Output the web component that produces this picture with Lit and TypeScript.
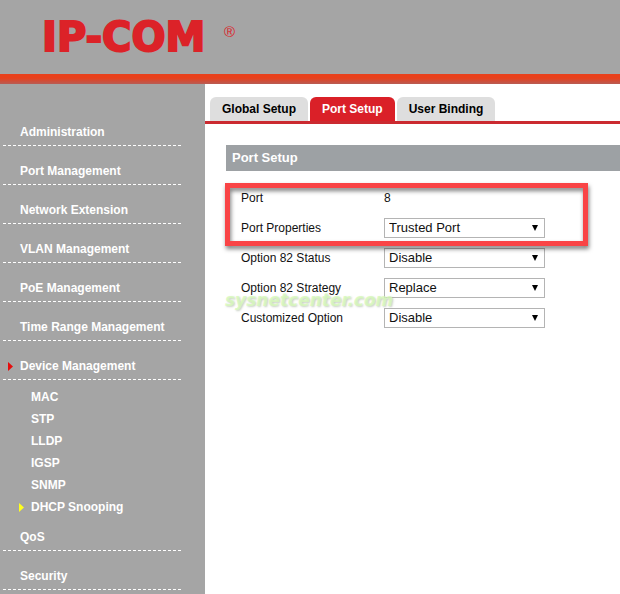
import { LitElement, html, css, nothing } from "lit";
import { customElement, state } from "lit/decorators.js";

interface MenuItem {
  label: string;
  children?: string[];
}

interface Field {
  id: string;
  label: string;
  value: string;
  options: string[];
}

const MENU: MenuItem[] = [
  { label: "Administration" },
  { label: "Port Management" },
  { label: "Network Extension" },
  { label: "VLAN Management" },
  { label: "PoE Management" },
  { label: "Time Range Management" },
  {
    label: "Device Management",
    children: ["MAC", "STP", "LLDP", "IGSP", "SNMP", "DHCP Snooping"],
  },
  { label: "QoS" },
  { label: "Security" },
];

const TABS = ["Global Setup", "Port Setup", "User Binding"];

const FIELDS: Field[] = [
  { id: "properties", label: "Port Properties", value: "Trusted Port", options: ["Trusted Port", "Untrusted Port"] },
  { id: "status", label: "Option 82 Status", value: "Disable", options: ["Disable", "Enable"] },
  { id: "strategy", label: "Option 82 Strategy", value: "Replace", options: ["Replace", "Keep", "Drop"] },
  { id: "custom", label: "Customized Option", value: "Disable", options: ["Disable", "Enable"] },
];

@customElement("site-header")
export class SiteHeader extends LitElement {
  static styles = css`
    :host {
      display: block;
    }
    .bar {
      display: flex;
      align-items: center;
      height: 74px;
      padding-left: 42px;
      background: #a5a5a5;
      color: #dc2228;
    }
    .brand {
      display: flex;
      gap: 4px;
      font-family: "DejaVu Sans", sans-serif;
    }
    .name {
      min-width: 178px;
      font-size: 40px;
      line-height: 42px;
      font-weight: 700;
      -webkit-text-stroke: 2px #dc2228;
    }
    .mark {
      font-family: "Liberation Sans", sans-serif;
      font-size: 15px;
      line-height: 32px;
    }
    .stripe {
      height: 10px;
      background: linear-gradient(#e8401c 0 40%, #b85c54);
    }
  `;

  render() {
    return html`
      <header>
        <div class="bar">
          <div class="brand"><span class="name">IP-COM</span><span class="mark">®</span></div>
        </div>
        <div class="stripe"></div>
      </header>
    `;
  }
}

@customElement("side-menu")
export class SideMenu extends LitElement {
  static styles = css`
    :host {
      display: block;
      background: #a5a5a5;
    }
    ul {
      margin: 0;
      padding: 0;
      list-style: none;
      display: flex;
      flex-direction: column;
    }
    .menu {
      gap: 17px;
      padding: 40px 22px 0 3px;
    }
    a {
      display: flex;
      align-items: center;
      gap: 7px;
      color: #fff;
      font-weight: 700;
      font-size: 12px;
      text-decoration: none;
      white-space: nowrap;
    }
    .item {
      height: 22px;
      padding: 0 0 6px 5px;
      box-sizing: border-box;
      background: repeating-linear-gradient(90deg, #fff 0 3px, transparent 3px 5px) bottom / 100% 1px no-repeat;
    }
    .sub {
      gap: 10px;
      padding: 11px 0 0 16px;
    }
    .sub a {
      height: 12px;
    }
    .sub li:last-child {
      height: 11px;
    }
    .arrow {
      width: 5px;
      height: 9px;
      flex: none;
    }
    .red {
      fill: #e60c0c;
    }
    .yellow {
      fill: #ffff1e;
    }
    .blank {
      fill: none;
    }
  `;

  private arrow(tone: string) {
    return html`<svg class="arrow ${tone}" viewBox="0 0 5 9" aria-hidden="true"><path d="M0 0L5 4.5L0 9Z" /></svg>`;
  }

  render() {
    return html`
      <nav>
        <ul class="menu">
          ${MENU.map(
            (item) => html`
              <li>
                <a class="item" href="#">${this.arrow(item.children ? "red" : "blank")}${item.label}</a>
                ${item.children
                  ? html`<ul class="sub">
                      ${item.children.map(
                        (child) => html`<li>
                          <a href="#">${this.arrow(child === "DHCP Snooping" ? "yellow" : "blank")}${child}</a>
                        </li>`
                      )}
                    </ul>`
                  : nothing}
              </li>
            `
          )}
        </ul>
      </nav>
    `;
  }
}

@customElement("port-form")
export class PortForm extends LitElement {
  static styles = css`
    :host {
      display: block;
      position: relative;
    }
    h1 {
      margin: 0;
      padding: 0 6px;
      background: #9da1a4;
      color: #fff;
      font-size: 13px;
      line-height: 26px;
      font-weight: 700;
    }
    .rows {
      padding: 12px 15px 0;
    }
    .row {
      display: grid;
      grid-template-columns: 143px 161px;
      align-items: center;
      height: 30px;
    }
    .picker {
      display: grid;
      align-items: center;
    }
    select,
    .caret {
      grid-area: 1 / 1;
    }
    select {
      appearance: none;
      width: 100%;
      height: 20px;
      margin: 0;
      padding: 0 20px 0 4px;
      border: 1px solid #b4b4b4;
      border-radius: 0;
      background: #fff;
      color: #111;
      font-family: inherit;
      font-size: 13px;
      line-height: 18px;
    }
    .caret {
      justify-self: end;
      width: 6px;
      height: 6px;
      margin-right: 7px;
      pointer-events: none;
    }
    .highlight {
      position: absolute;
      top: 38px;
      left: -1px;
      width: 363px;
      height: 63px;
      box-sizing: border-box;
      border: 5px solid #f94446;
      pointer-events: none;
      filter: drop-shadow(1px 3px 2px rgba(0, 0, 0, 0.5));
    }
    .watermark {
      position: absolute;
      top: 145px;
      left: -1px;
      font-family: "DejaVu Sans", sans-serif;
      font-size: 17px;
      line-height: 20px;
      font-weight: 700;
      font-style: italic;
      color: rgba(215, 250, 185, 0.8);
      text-shadow: 1px 1px 2px rgba(120, 140, 110, 0.4);
      pointer-events: none;
    }
  `;

  render() {
    return html`
      <h1>Port Setup</h1>
      <form class="rows">
        <div class="row"><span>Port</span><span>8</span></div>
        ${FIELDS.map(
          (f) => html`
            <div class="row">
              <label for=${f.id}>${f.label}</label>
              <div class="picker">
                <select id=${f.id}>
                  ${f.options.map((o) => html`<option ?selected=${o === f.value}>${o}</option>`)}
                </select>
                <svg class="caret" viewBox="0 0 6 6" aria-hidden="true"><path d="M0 0H6L3 6Z" /></svg>
              </div>
            </div>
          `
        )}
      </form>
      <div class="watermark">sysnetcenter.com</div>
      <div class="highlight"></div>
    `;
  }
}

@customElement("app-root")
export class AppRoot extends LitElement {
  static styles = css`
    :host {
      display: flex;
      flex-direction: column;
      min-height: 100vh;
      background: #fff;
      color: #111;
      font-family: "Liberation Sans", Arial, sans-serif;
      font-size: 12px;
    }
    .body {
      flex: 1;
      display: grid;
      grid-template-columns: 205px minmax(0, 1fr);
    }
    .tabs {
      display: flex;
      gap: 2px;
      padding: 13px 5px 0;
      border-bottom: 3px solid #cb2a30;
    }
    .tab {
      height: 24px;
      padding: 0 12px;
      border: 0;
      border-radius: 6px 6px 0 0;
      background: #dedede;
      color: #000;
      font: 700 12px/24px "Liberation Sans", Arial, sans-serif;
      white-space: nowrap;
    }
    .tab.active {
      background: #da2028;
      color: #fff;
    }
    .content {
      padding: 21px 0 0 21px;
    }
  `;

  @state() private active = "Port Setup";

  render() {
    return html`
      <site-header></site-header>
      <div class="body">
        <side-menu></side-menu>
        <main>
          <div class="tabs" role="tablist">
            ${TABS.map(
              (t) => html`<button
                class="tab ${t === this.active ? "active" : ""}"
                role="tab"
                aria-selected=${t === this.active}
                @click=${() => (this.active = t)}
              >${t}</button>`
            )}
          </div>
          <div class="content"><port-form></port-form></div>
        </main>
      </div>
    `;
  }
}
